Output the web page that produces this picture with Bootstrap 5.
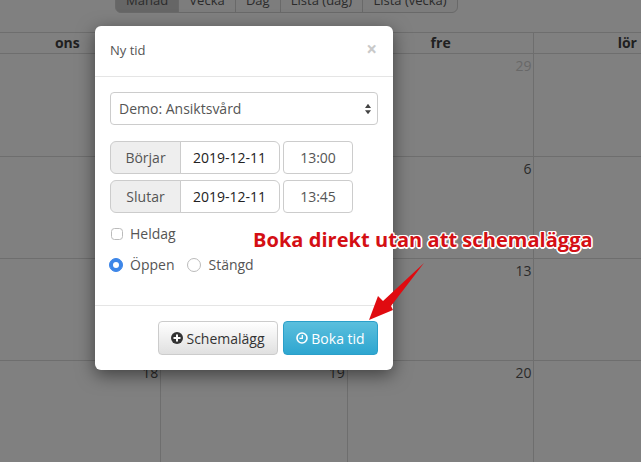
<!DOCTYPE html>
<html lang="sv">
<head>
<meta charset="utf-8">
<title>Ny tid</title>
<link href="https://cdn.jsdelivr.net/npm/bootstrap@5.3.0/dist/css/bootstrap.min.css" rel="stylesheet">
<style>
html,body{height:100%;}
body{width:641px;height:462px;overflow:hidden;background:#808080;font-family:"Open Sans",sans-serif;font-size:14px;color:#222;position:relative;}
.cal-bar{margin-top:-21px;height:53px;padding-left:115px;}
.cal-bar .btn-group{height:34px;}
.cal-bar .btn{background:#7d7d7d;border-color:#696969;color:#2b2b2b;font-size:13px;padding:8px 10.1px 0;line-height:20px;box-shadow:none;white-space:nowrap;}
.cal-bar .btn.is-on{background:#666;}
.cal-grid{display:grid;grid-template-columns:repeat(4,186.67px);grid-template-rows:21px 102.5px 102.5px 102px 102px;margin-left:-25.5px;width:760px;border-top:1px solid #6e6e6e;}
.cal-head{font-weight:700;font-size:14px;text-align:center;line-height:20px;color:#202020;border-bottom:1px solid #6e6e6e;border-right:1px solid #6e6e6e;}
.cal-cell{font-size:14px;text-align:right;padding:2px 2px 0 0;color:#2b2b2b;border-bottom:1px solid #6e6e6e;border-right:1px solid #6e6e6e;line-height:20px;}
.cal-cell.is-off{color:#686868;}
.dlg{position:absolute;left:95px;top:26px;width:298px;height:344px;border:0;border-radius:6px;box-shadow:0 5px 18px rgba(0,0,0,.5);background:#fff;color:#555;font-size:14px;}
.dlg .modal-header{height:51px;padding:0 15px;border-bottom:1px solid #e5e5e5;align-items:center;}
.dlg-title{font-size:13px;font-weight:400;color:#555;margin:0;}
.dlg-x{font-size:19px;font-weight:700;color:#c9c9c9;line-height:1;margin-top:-3px;margin-right:1px;}
.dlg .modal-body{padding:15px 15px 0;height:228px;flex:none;}
.dlg-select{height:33px;padding:0 20px 0 8px;font-size:14px;color:#555;border-color:#ccc;border-radius:4px;background-size:6px 12px;background-position:right 6px center;background-image:url("data:image/svg+xml,%3Csvg xmlns='http://www.w3.org/2000/svg' viewBox='0 0 8 14'%3E%3Cpath fill='%23444' d='M4 0l4 5.5H0zM4 14L0 8.5h8z'/%3E%3C/svg%3E");}
.time-row{margin-bottom:6px;gap:3px;}
.time-row .input-group{width:170px;flex:none;height:33px;}
.time-label{width:71px;justify-content:center;padding:0;background:#eee;border-color:#ccc;color:#555;font-size:14px;}
.time-date{padding:0 12px;font-size:14px;color:#222;border-color:#ccc;height:33px;}
.time-box{width:70px;height:33px;padding:0;text-align:center;font-size:14px;color:#555;border-color:#ccc;border-radius:4px;}
.dlg-check{display:flex;align-items:center;gap:7px;margin:0;color:#555;font-size:14px;line-height:20px;}
.dlg-check .form-check-input{margin:0 0 0 1px;flex:none;width:12px;height:12px;border-color:#bbb;}
.dlg-check .form-check-input[type=radio]{width:14px;height:14px;margin-left:-1px;}
.dlg-check .form-check-input:checked{background-color:#3d86e8;border-color:#3d86e8;}
.radio-row{gap:14px;margin-top:11px;}
.first-check{margin-top:11px;}
.dlg .modal-footer{padding:15px 15px 0;border-top:1px solid #e5e5e5;gap:5px;justify-content:flex-end;height:65px;align-items:flex-start;flex-wrap:nowrap;}
.dlg .modal-footer>*{margin:0;}
.btn-sched,.btn-book{height:34px;font-size:14px;padding:0;display:flex;align-items:center;justify-content:center;gap:3px;border-radius:4px;}
.btn-sched{width:120px;background:linear-gradient(#fff,#e0e0e0);border:1px solid #ccc;color:#333;}
.btn-book{width:95px;background:linear-gradient(#5bbfdd,#2ea6d0);border:1px solid #2b9fc9;color:#fff;}
.note{position:absolute;left:253px;top:227px;font-size:20px;letter-spacing:.05px;font-weight:700;line-height:26px;color:#d40f14;white-space:nowrap;text-shadow:-1px -1px 0 #fff,1px -1px 0 #fff,-1px 1px 0 #fff,1px 1px 0 #fff,0 1.5px 0 #fff,0 -1.5px 0 #fff,1.5px 0 0 #fff,-1.5px 0 0 #fff;}
.note-arrow{position:absolute;left:360px;top:258px;}
</style>
</head>
<body>
<div class="cal-bar d-flex">
  <div class="btn-group">
    <button class="btn is-on" type="button">Månad</button>
    <button class="btn" type="button">Vecka</button>
    <button class="btn" type="button">Dag</button>
    <button class="btn" type="button">Lista (dag)</button>
    <button class="btn" type="button">Lista (vecka)</button>
  </div>
</div>
<div class="cal-grid">
  <div class="cal-head">ons</div><div class="cal-head">tor</div><div class="cal-head">fre</div><div class="cal-head">lör</div>
  <div class="cal-cell is-off">27</div><div class="cal-cell is-off">28</div><div class="cal-cell is-off">29</div><div class="cal-cell is-off">30</div>
  <div class="cal-cell">4</div><div class="cal-cell">5</div><div class="cal-cell">6</div><div class="cal-cell">7</div>
  <div class="cal-cell">11</div><div class="cal-cell">12</div><div class="cal-cell">13</div><div class="cal-cell">14</div>
  <div class="cal-cell">18</div><div class="cal-cell">19</div><div class="cal-cell">20</div><div class="cal-cell">21</div>
</div>

<div class="dlg modal-content">
  <div class="modal-header">
    <h5 class="dlg-title">Ny tid</h5>
    <span class="dlg-x ms-auto">×</span>
  </div>
  <div class="modal-body">
    <select class="form-select dlg-select mb-3"><option>Demo: Ansiktsvård</option></select>
    <div class="d-flex time-row">
      <div class="input-group">
        <span class="input-group-text time-label">Börjar</span>
        <input class="form-control time-date" value="2019-12-11">
      </div>
      <input class="form-control time-box" value="13:00">
    </div>
    <div class="d-flex time-row">
      <div class="input-group">
        <span class="input-group-text time-label">Slutar</span>
        <input class="form-control time-date" value="2019-12-11">
      </div>
      <input class="form-control time-box" value="13:45">
    </div>
    <label class="dlg-check first-check"><input class="form-check-input" type="checkbox">Heldag</label>
    <div class="d-flex radio-row">
      <label class="dlg-check"><input class="form-check-input" type="radio" name="st" checked>Öppen</label>
      <label class="dlg-check"><input class="form-check-input" type="radio" name="st">Stängd</label>
    </div>
  </div>
  <div class="modal-footer">
    <button class="btn btn-sched" type="button">
      <svg width="12" height="12" viewBox="0 0 12 12"><circle cx="6" cy="6" r="6" fill="#333"/><path d="M5 2.5h2V5h2.5v2H7v2.5H5V7H2.5V5H5z" fill="#fff"/></svg>
      Schemalägg</button>
    <button class="btn btn-book" type="button">
      <svg width="12" height="12" viewBox="0 0 12 12" fill="none" stroke="#fff"><circle cx="6" cy="6" r="5" stroke-width="1.6"/><path d="M6.3 3v3.3H3.5" stroke-width="1.3"/></svg>
      Boka tid</button>
  </div>
</div>

<div class="note">Boka direkt utan att schemalägga</div>
<svg class="note-arrow" width="70" height="66" viewBox="360 258 70 66"><polygon points="424,263 391,306 393,310 369,320 378,296 383,301" fill="#e00b10"/></svg>
</body>
</html>
